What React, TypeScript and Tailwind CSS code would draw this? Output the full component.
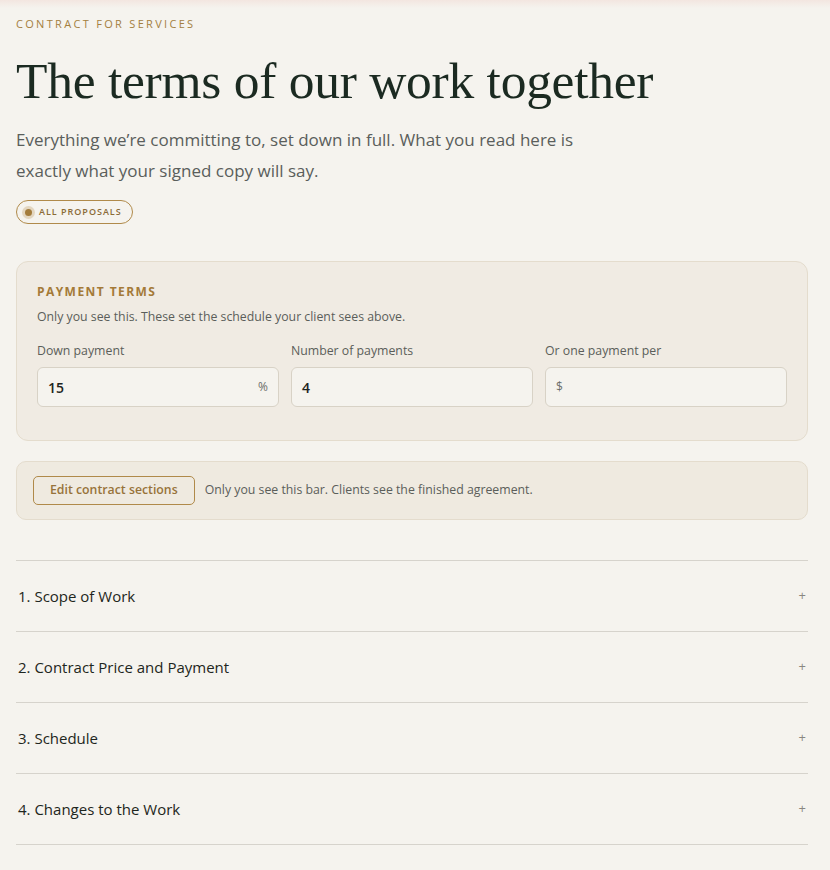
import React from 'react';

const sans = { fontFamily: '"Open Sans", "Noto Sans", sans-serif' };

const sections = ['1. Scope of Work', '2. Contract Price and Payment', '3. Schedule', '4. Changes to the Work'];

const Field: React.FC<{ label: string; value?: string; prefix?: string; suffix?: string }> = ({ label, value, prefix, suffix }) => (
    <div className="flex flex-col">
        <span className="text-[12.3px] text-[#5b5e5a] mb-[7px] leading-[18px]">{label}</span>
        <div className="h-10 rounded-md border border-[#d8d2c6] bg-[#f5f3ee] flex items-center px-[10px]">
            {prefix && <span className="text-[12px] text-[#6b6e6a] mr-2">{prefix}</span>}
            <span className="flex-1 text-[14px] font-semibold text-[#1e2420]">{value}</span>
            {suffix && <span className="text-[12px] text-[#6b6e6a]">{suffix}</span>}
        </div>
    </div>
);

const App: React.FC = () => {
    return (
        <div className="min-h-screen bg-[#f5f3ee]" style={sans}>
            <div className="h-2 bg-gradient-to-b from-[#f3e6e0] to-[#f5f3ee]"></div>
            <div className="pl-4 pr-[22px] pt-[9px] pb-10">
                <p className="text-[11px] tracking-[0.21em] text-[#a47f3f] font-medium leading-[14px]">CONTRACT FOR SERVICES</p>

                <h1 className="mt-[22px] text-[51.5px] leading-[56px] text-[#1b2a21] tracking-[-0.005em]" style={{ fontFamily: '"Liberation Serif", "DejaVu Serif", serif' }}>
                    The terms of our work together
                </h1>

                <p className="mt-[15px] text-[17px] leading-[31px] text-[#5a5e5b] max-w-[590px]">
                    Everything we’re committing to, set down in full. What you read here is exactly what your signed copy will say.
                </p>

                <div className="mt-[14px] inline-flex items-center h-6 rounded-full border border-[#b08a4a] pl-[5px] pr-[10px]">
                    <span className="w-[13px] h-[13px] rounded-full bg-[#e3d6c0] flex items-center justify-center">
                        <span className="w-[7px] h-[7px] rounded-full bg-[#a37c3c]"></span>
                    </span>
                    <span className="ml-[4px] text-[9px] tracking-[0.11em] text-[#8a6a36] font-semibold">ALL PROPOSALS</span>
                </div>

                <div className="mt-[37px] rounded-xl border border-[#e4dccd] bg-[#f0ebe3] px-5 pt-[22px] pb-[33px]">
                    <p className="text-[12px] font-bold tracking-[0.12em] text-[#a47a38] leading-[15px]">PAYMENT TERMS</p>
                    <p className="mt-[9px] text-[12.3px] text-[#5b5e5a] leading-[18px]">Only you see this. These set the schedule your client sees above.</p>
                    <div className="mt-[16px] grid grid-cols-3 gap-3">
                        <Field label="Down payment" value="15" suffix="%" />
                        <Field label="Number of payments" value="4" />
                        <Field label="Or one payment per" prefix="$" />
                    </div>
                </div>

                <div className="mt-[20px] rounded-[10px] border border-[#e4dccd] bg-[#efeae0] h-[59px] flex items-center px-4">
                    <button className="h-[29px] px-4 rounded-[5px] border border-[#b08a4a] text-[12.3px] font-semibold text-[#97733a]">Edit contract sections</button>
                    <span className="ml-[10px] text-[12.3px] text-[#5b5e5a]">Only you see this bar. Clients see the finished agreement.</span>
                </div>

                <div className="mt-10 border-t border-[#d6d3cc]">
                    {sections.map(s => (
                        <div key={s} className="h-[71px] border-b border-[#d6d3cc] flex items-center justify-between pl-[2px] pr-[2px]">
                            <span className="text-[15px] text-[#1e2620]">{s}</span>
                            <span className="text-[13px] text-[#8a8680]">+</span>
                        </div>
                    ))}
                </div>
            </div>
        </div>
    );
};

export default App;
